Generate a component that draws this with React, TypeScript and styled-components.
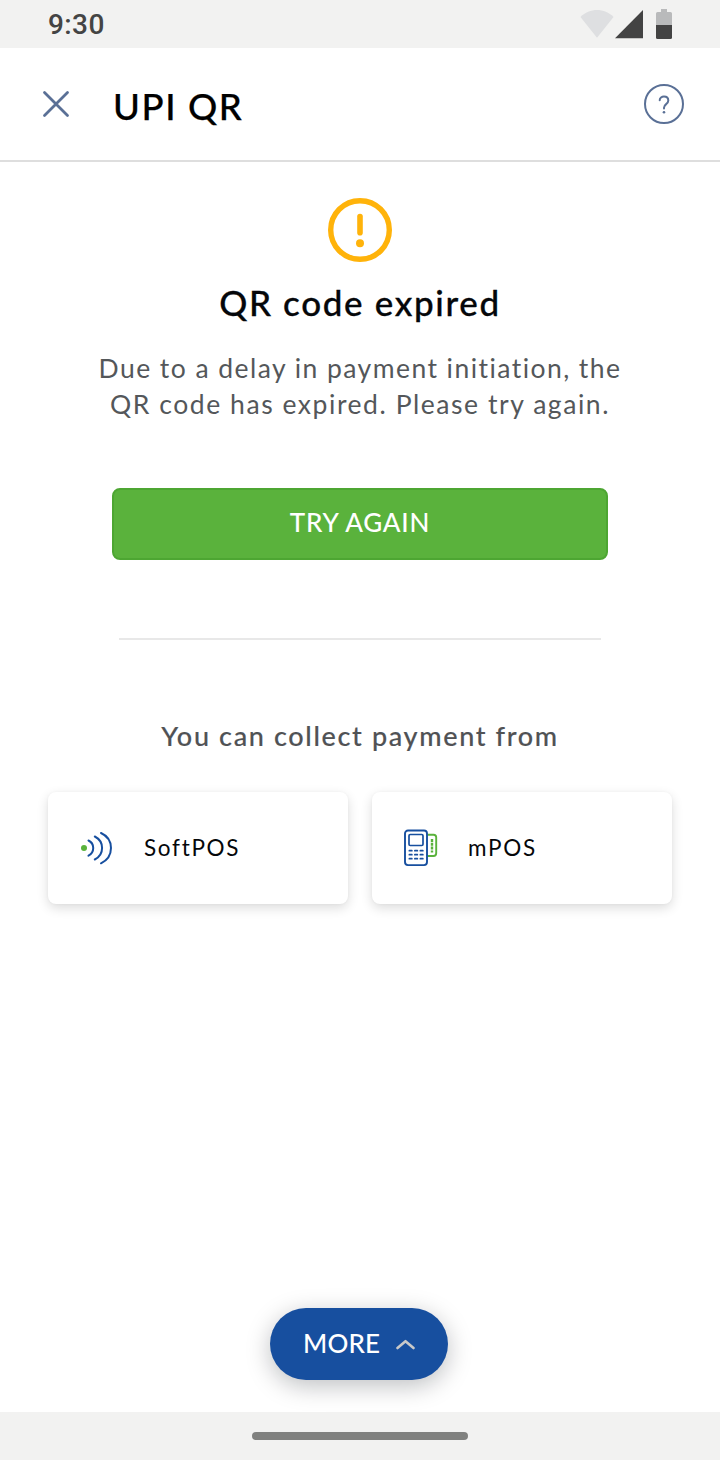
import React from "react";
import styled, { createGlobalStyle } from "styled-components";

const GlobalStyle = createGlobalStyle`
  * { box-sizing: border-box; }
  body { margin: 0; background: #fff; font-family: Lato, "Liberation Sans", sans-serif; }
  button { font-family: inherit; cursor: pointer; }
`;

const Screen = styled.div`
  width: 720px;
  height: 1460px;
  display: flex;
  flex-direction: column;
  background: #fff;
`;

const StatusBar = styled.div`
  height: 48px;
  flex: none;
  padding: 0 48px;
  display: flex;
  align-items: center;
  justify-content: space-between;
  background: #f2f2f1;
`;

const Clock = styled.span`
  padding-top: 2px;
  font: 500 28px/48px Roboto, sans-serif;
  letter-spacing: 0.4px;
  color: #444;
`;

const StatusIcons = styled.svg`
  display: block;
`;

const Header = styled.header`
  height: 114px;
  flex: none;
  display: flex;
  align-items: center;
  padding: 0 36px 0 36px;
  border-bottom: 2px solid #dedede;
`;

const IconButton = styled.button`
  width: 40px;
  height: 40px;
  padding: 0;
  border: 0;
  background: none;
  svg { display: block; }
`;

const Title = styled.h1`
  flex: 1;
  margin: 0 0 0 37px;
  padding-top: 4px;
  font-size: 36.5px;
  line-height: 48px;
  font-weight: 500;
  letter-spacing: 1.6px;
  color: #000;
  -webkit-text-stroke: 0.25px #000;
`;

const HelpButton = styled(IconButton)`
  border: 2px solid #5a7096;
  border-radius: 50%;
`;

const Main = styled.main`
  flex: 1;
  display: flex;
  flex-direction: column;
  align-items: center;
  padding: 36px 48px 32px;
`;

const AlertIcon = styled.svg`
  display: block;
  flex: none;
`;

const Headline = styled.h2`
  margin: 20px 0 0;
  font-size: 35px;
  line-height: 40px;
  font-weight: 500;
  letter-spacing: 1.65px;
  color: #05070a;
  -webkit-text-stroke: 0.3px #05070a;
`;

const Message = styled.p`
  margin: 28px 0 0;
  font-size: 26.5px;
  line-height: 36px;
  text-align: center;
  color: #54575a;
`;

const MessageLine = styled.span<{ $spacing: number }>`
  display: block;
  white-space: nowrap;
  letter-spacing: ${(p) => p.$spacing}px;
`;

const PrimaryButton = styled.button`
  width: 496px;
  height: 72px;
  flex: none;
  margin-top: 66px;
  padding: 0 0 4px;
  border: 2px solid #4da632;
  border-radius: 8px;
  background: #5ab23c;
  color: #fff;
  font-size: 26px;
  font-weight: 500;
  letter-spacing: 0.8px;
`;

const Divider = styled.hr`
  width: 482px;
  height: 2px;
  flex: none;
  margin: 78px 0 0;
  border: 0;
  background: #e8e8e8;
`;

const Subheading = styled.h3`
  margin: 78px 0 0;
  font-size: 27px;
  line-height: 36px;
  font-weight: 500;
  letter-spacing: 1.65px;
  color: #505255;
  -webkit-text-stroke: 0.15px #505255;
`;

const Options = styled.div`
  width: 100%;
  margin-top: 38px;
  display: grid;
  grid-template-columns: 1fr 1fr;
  gap: 24px;
`;

const OptionCard = styled.button`
  height: 112px;
  display: flex;
  align-items: center;
  padding: 0 28px;
  border: 0;
  border-radius: 8px;
  background: #fff;
  box-shadow: 0 4px 12px rgba(0, 0, 0, 0.14), 0 0 3px rgba(0, 0, 0, 0.04);
  svg { display: block; flex: none; }
`;

const OptionLabel = styled.span`
  margin-left: 28px;
  font-size: 22.5px;
  line-height: 32px;
  letter-spacing: 1.7px;
  color: #05070a;
`;

const MoreButton = styled.button`
  width: 178px;
  height: 72px;
  flex: none;
  margin: auto 2px 0 0;
  padding: 0 33px 0 33px;
  display: flex;
  align-items: center;
  justify-content: space-between;
  border: 0;
  border-radius: 36px;
  background: #174f9f;
  color: #fff;
  box-shadow: 0 6px 24px rgba(0, 10, 20, 0.26);
  svg { display: block; }
`;

const MoreLabel = styled.span`
  padding-bottom: 3px;
  font-size: 26px;
  line-height: 32px;
  font-weight: 500;
  letter-spacing: 0.2px;
`;

const NavBar = styled.div`
  height: 48px;
  flex: none;
  display: flex;
  align-items: center;
  justify-content: center;
  background: #f2f2f1;
`;

const HomeIndicator = styled.div`
  width: 216px;
  height: 8px;
  border-radius: 4px;
  background: #80817f;
`;

const keypad = [20, 24, 28].flatMap((y) => [8, 13.5, 19].map((x) => ({ x, y })));

export default function App() {
  return (
    <>
      <GlobalStyle />
      <Screen>
        <StatusBar>
          <Clock>9:30</Clock>
          <StatusIcons width="92" height="48" viewBox="0 0 92 48">
            <path d="M.5 17C9.500 7.700 24.500 7.700 33.500 17L17 37.700Z" fill="#dedfe1" />
            <path d="M35 38.200L63 10V38.200Z" fill="#434343" />
            <path d="M76 25V13.500Q76 12 77.500 12H81V9H87V12H90.500Q92 12 92 13.500V25Z" fill="#b9babb" />
            <path d="M76 25H92V37.500Q92 39 90.500 39H77.500Q76 39 76 37.500Z" fill="#434343" />
          </StatusIcons>
        </StatusBar>
        <Header>
          <IconButton aria-label="Close">
            <svg width="40" height="40" viewBox="0 0 40 40" stroke="#5a7096" strokeWidth="2.8" strokeLinecap="round">
              <path d="M8.500 8.500L31.500 31.500M31.500 8.500L8.500 31.500" />
            </svg>
          </IconButton>
          <Title>UPI QR</Title>
          <HelpButton aria-label="Help">
            <svg width="36" height="36" viewBox="0 0 36 36" fill="none" stroke="#5a7096" strokeWidth="2" strokeLinecap="round">
              <path d="M13.700 14.300C13.700 9.300 22.300 9.300 22.300 14.500C22.300 18.300 18 18 18 21.800V22.500" />
              <circle cx="18" cy="26.200" r="1.300" fill="#5a7096" stroke="none" />
            </svg>
          </HelpButton>
        </Header>
        <Main>
          <AlertIcon width="64" height="64" viewBox="0 0 64 64">
            <circle cx="32" cy="32" r="29.300" fill="none" stroke="#ffb30a" strokeWidth="5.400" />
            <path d="M32 18.500V34.700" stroke="#ffb30a" strokeWidth="5.600" strokeLinecap="round" />
            <circle cx="32" cy="45.300" r="4" fill="#ffb30a" />
          </AlertIcon>
          <Headline>QR code expired</Headline>
          <Message>
            <MessageLine $spacing={1.45}>Due to a delay in payment initiation, the</MessageLine>
            <MessageLine $spacing={1.55}>QR code has expired. Please try again.</MessageLine>
          </Message>
          <PrimaryButton>TRY AGAIN</PrimaryButton>
          <Divider />
          <Subheading>You can collect payment from</Subheading>
          <Options>
            <OptionCard>
              <svg width="40" height="40" viewBox="0 0 40 40" fill="none" stroke="#174f9f" strokeWidth="2" strokeLinecap="round">
                <circle cx="8" cy="20" r="3" fill="#5ab23c" stroke="none" />
                <path d="M12.500 12.500C18.800 15.500 18.800 24.500 12.500 27.700" />
                <path d="M18.800 8.500C28.500 13.500 28.500 26.500 18.800 31.500" />
                <path d="M25 5C38.300 11 38.300 29 25 35.300" />
              </svg>
              <OptionLabel>SoftPOS</OptionLabel>
            </OptionCard>
            <OptionCard>
              <svg width="40" height="40" viewBox="0 0 40 40" fill="none">
                <path d="M27.500 6.700H33.500Q36.200 6.700 36.200 9.300V25.300Q36.200 28 33.500 28H27.500" stroke="#5ab23c" strokeWidth="1.900" />
                <path d="M32 11V24.500" stroke="#5ab23c" strokeWidth="2.400" strokeDasharray="3 .8" />
                <rect x="5" y="2.500" width="22" height="34.600" rx="3" stroke="#174f9f" strokeWidth="1.900" />
                <rect x="9" y="6.500" width="14" height="11" rx="1.200" stroke="#174f9f" strokeWidth="1.700" />
                {keypad.map(({ x, y }) => (
                  <rect key={`${x}-${y}`} x={x + 0.5} y={y + 1.8} width="4.200" height="1.700" rx=".85" fill="#174f9f" />
                ))}
              </svg>
              <OptionLabel>mPOS</OptionLabel>
            </OptionCard>
          </Options>
          <MoreButton>
            <MoreLabel>MORE</MoreLabel>
            <svg width="20" height="12" viewBox="0 0 20 12" fill="none" stroke="#c9c9c9" strokeWidth="2.600" strokeLinecap="round" strokeLinejoin="round">
              <path d="M2.500 10L10.500 3.200L18.500 10" />
            </svg>
          </MoreButton>
        </Main>
        <NavBar>
          <HomeIndicator />
        </NavBar>
      </Screen>
    </>
  );
}
